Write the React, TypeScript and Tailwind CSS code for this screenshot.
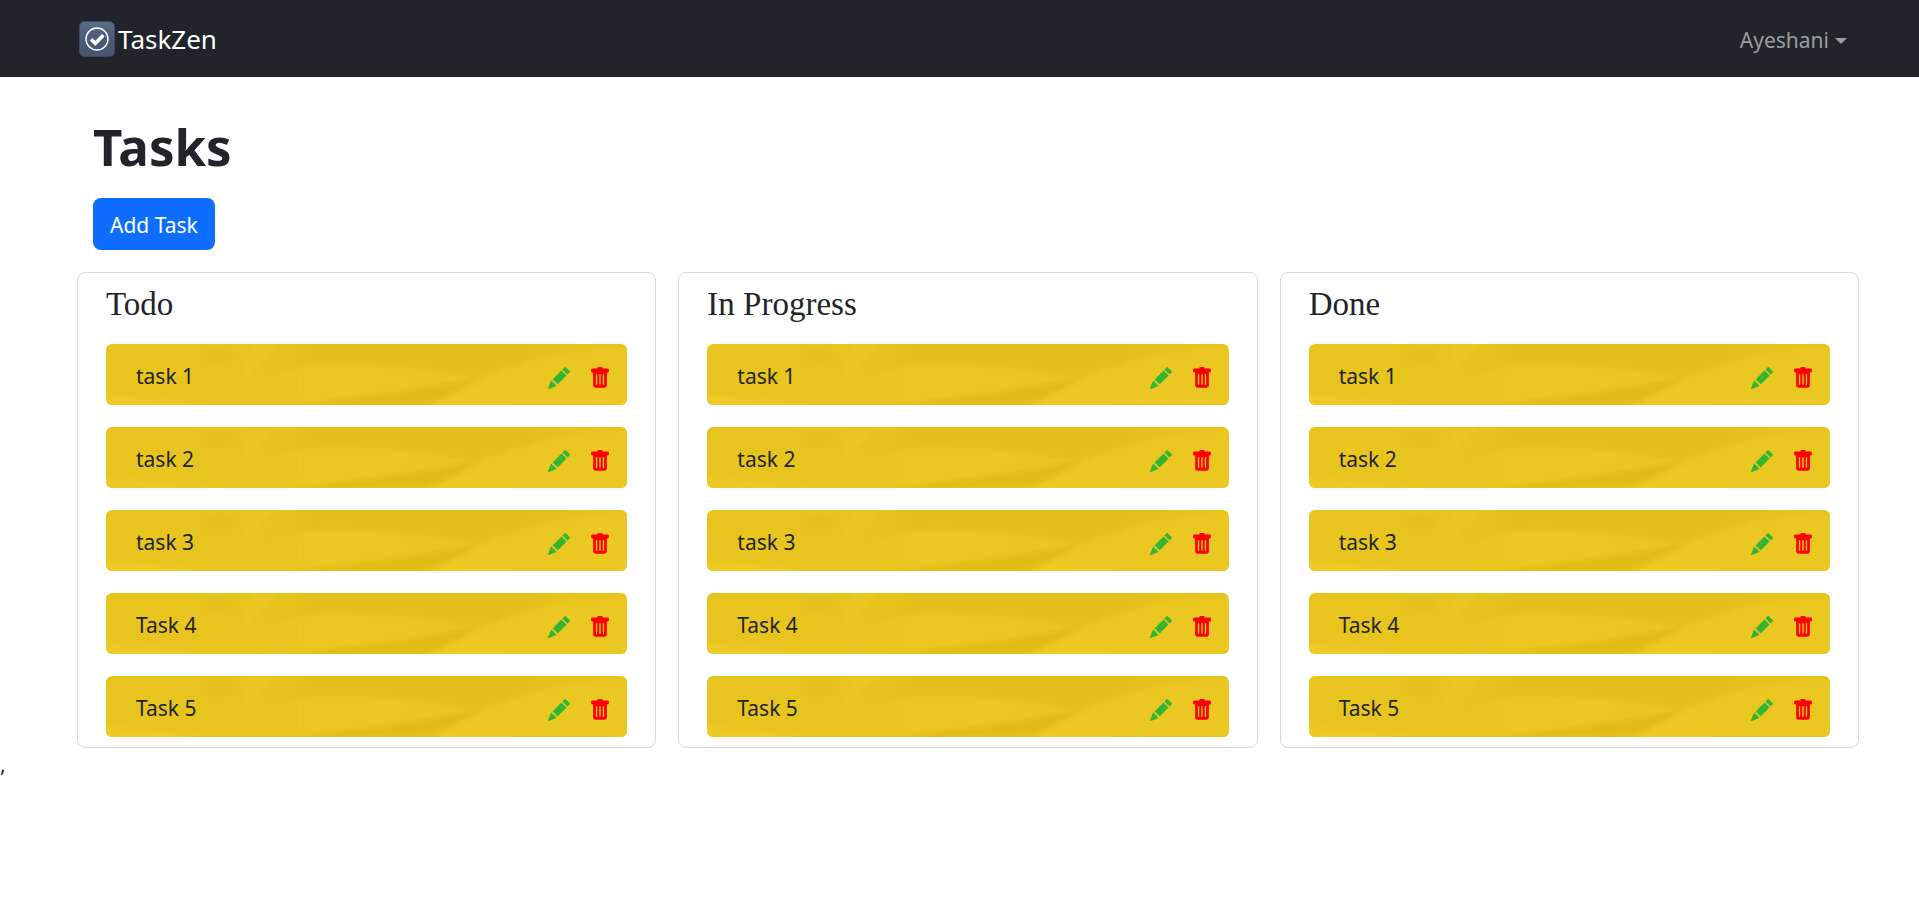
import { BsPencilFill, BsTrashFill } from "react-icons/bs";

const columns = [
  { id: "todo", title: "Todo" },
  { id: "in-progress", title: "In Progress" },
  { id: "done", title: "Done" },
];

const tasks = ["task 1", "task 2", "task 3", "Task 4", "Task 5"];

function Logo() {
  return (
    <svg viewBox="0 0 36 36" className="size-9 shrink-0" aria-hidden="true">
      <defs>
        <linearGradient id="logo-fill" x1="0" y1="0" x2="0" y2="1">
          <stop offset="0" stopColor="#5c6b87" />
          <stop offset="0.5" stopColor="#4b5b77" />
          <stop offset="1" stopColor="#46566f" />
        </linearGradient>
      </defs>
      <rect x="0.5" y="0.5" width="35" height="35" rx="5" fill="url(#logo-fill)" stroke="#3d4b63" />
      <circle cx="18" cy="18" r="11" fill="none" stroke="#fff" strokeWidth="1.4" />
      <path d="M12 18.2l4.3 4.2 8-8.2" fill="none" stroke="#fff" strokeWidth="3.6" />
    </svg>
  );
}

function PaperTexture() {
  return (
    <svg
      viewBox="0 0 523 61"
      preserveAspectRatio="none"
      className="absolute inset-0 size-full"
      aria-hidden="true"
    >
      <defs>
        <linearGradient id="paper-lobe" x1="0" y1="0" x2="1" y2="0">
          <stop offset="0" stopColor="#ebc721" stopOpacity="0" />
          <stop offset="0.25" stopColor="#ebc721" />
          <stop offset="1" stopColor="#eac621" />
        </linearGradient>
        <linearGradient id="paper-top" x1="0" y1="0" x2="1" y2="0">
          <stop offset="0" stopColor="#e5c01b" stopOpacity="0" />
          <stop offset="0.15" stopColor="#e5c01b" />
          <stop offset="0.7" stopColor="#e5c01b" />
          <stop offset="1" stopColor="#e9c41f" />
        </linearGradient>
        <filter id="paper-soft" x="-10%" y="-30%" width="120%" height="160%">
          <feGaussianBlur stdDeviation="2" />
        </filter>
        <filter id="paper-softer" x="-50%" y="-50%" width="200%" height="200%">
          <feGaussianBlur stdDeviation="5" />
        </filter>
      </defs>
      <rect width="523" height="61" fill="#e8c41f" />
      <ellipse cx="112" cy="12" rx="18" ry="8" fill="#e5c01d" filter="url(#paper-softer)" />
      <g filter="url(#paper-soft)">
        <path d="M150 20L176 -4H530L442 13L372 34L150 61Z" fill="url(#paper-top)" />
        <path d="M136 24L150 -4H174L152 18L143 34Z" fill="#ebc622" />
        <path d="M146 64C150 34 176 22 226 21C290 21 330 28 372 34L300 46L190 60Z" fill="url(#paper-lobe)" />
        <path d="M300 66L332 57L376 35L442 14L530 4V66Z" fill="#ebc720" />
        <path d="M310 66L336 56L376 44L440 34L400 66Z" fill="#edc923" />
      </g>
      <path
        d="M185 61C250 55 310 46 376 34L332 57C325 59 318 60 308 61Z"
        fill="#e2bc17"
        filter="url(#paper-soft)"
      />
      <path d="M-4 50L60 56L120 63H-4Z" fill="#eeca25" filter="url(#paper-soft)" />
    </svg>
  );
}

function TaskItem({ name }: { name: string }) {
  return (
    <li className="relative h-[61px] overflow-hidden rounded-md">
      <PaperTexture />
      <div className="relative flex h-full items-center justify-between pt-[3px] pr-4 pl-[30px]">
        <span>{name}</span>
        <div className="flex gap-[19px] pt-1">
          <button type="button" aria-label={`Edit ${name}`} className="cursor-pointer text-[#33b533]">
            <BsPencilFill size={22} />
          </button>
          <button type="button" aria-label={`Delete ${name}`} className="cursor-pointer text-[#ff0000]">
            <BsTrashFill size={22} />
          </button>
        </div>
      </div>
    </li>
  );
}

export default function App() {
  return (
    <div className="min-h-screen bg-white font-['Noto_Sans',sans-serif] text-[21px] leading-[33px] text-[#212529]">
      <header className="flex h-[77px] items-center justify-between bg-[#212529] pr-[72px] pl-[79px]">
        <a href="#" className="flex items-center gap-[3px] text-[26px] text-white">
          <Logo />
          <span className="pt-0.5">TaskZen</span>
        </a>
        <button
          type="button"
          aria-haspopup="menu"
          className="flex cursor-pointer items-center gap-1.5 pt-1 text-[#9b9d9e]"
        >
          Ayeshani
          <svg viewBox="0 0 12 6" className="h-1.5 w-3" aria-hidden="true">
            <path d="M0 0H12L6 6Z" fill="currentColor" />
          </svg>
        </button>
      </header>

      <main className="pr-[60px] pl-[77px]">
        <div className="px-4 pt-[39px]">
          <h1 className="text-[51px] leading-[60px] font-bold">Tasks</h1>
          <button
            type="button"
            className="mt-[22px] block h-[52px] cursor-pointer rounded-lg bg-[#0d6efd] px-[17px] pt-0.5 text-white"
          >
            Add Task
          </button>
        </div>

        <div className="mt-[22px] grid grid-cols-3 gap-[22px]">
          {columns.map((column) => (
            <section
              key={column.id}
              aria-labelledby={column.id}
              className="rounded-lg border border-[#d9d9da] px-7 pt-[11px] pb-2.5"
            >
              <h2 id={column.id} className="font-['Liberation_Serif',serif] text-[33px] leading-10">
                {column.title}
              </h2>
              <ul className="mt-5 flex flex-col gap-[22px]">
                {tasks.map((task) => (
                  <TaskItem key={task} name={task} />
                ))}
              </ul>
            </section>
          ))}
        </div>
      </main>
      <p>,</p>
    </div>
  );
}
